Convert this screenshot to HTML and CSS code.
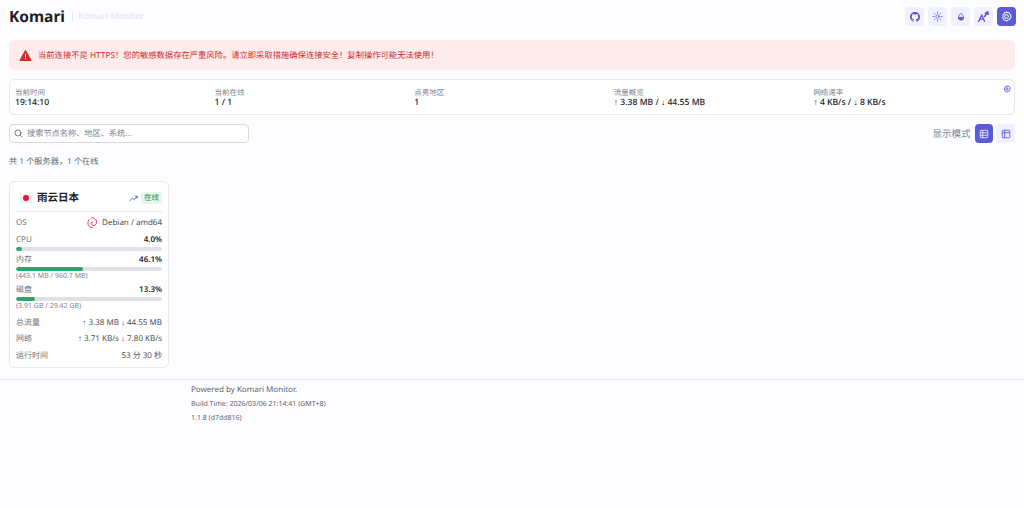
FILE: index.html
```html
<!DOCTYPE html>
<html lang="zh-CN">
<head>
<meta charset="utf-8">
<title>Komari Monitor</title>
<link rel="stylesheet" href="styles.css">
</head>
<body>
<header class="topbar">
  <div class="brand"><span class="brand-name">Komari</span><span class="brand-sep"></span><span class="brand-sub">Komari Monitor</span></div>
  <div class="actions">
    <button class="icon-btn"><svg viewBox="0 0 16 16" width="10" height="10" fill="currentColor"><path d="M8 0C3.58 0 0 3.58 0 8c0 3.54 2.29 6.53 5.47 7.59.4.07.55-.17.55-.38 0-.19-.01-.82-.01-1.490-2.010.37-2.530-.49-2.690-.94-.09-.23-.48-.94-.82-1.130-.28-.15-.68-.52-.01-.53.63-.01 1.080.58 1.230.82.72 1.210 1.870.87 2.330.66.07-.52.28-.87.51-1.070-1.780-.2-3.640-.89-3.640-3.950 0-.87.31-1.590.82-2.150-.08-.2-.36-1.020.08-2.120 0 0 .67-.21 2.200.82.64-.18 1.320-.27 2-.27.68 0 1.360.09 2 .27 1.530-1.040 2.200-.82 2.200-.82.44 1.100.16 1.920.08 2.120.51.56.82 1.270.82 2.150 0 3.070-1.870 3.750-3.650 3.950.29.25.54.73.54 1.480 0 1.070-.01 1.930-.01 2.200 0 .21.15.46.55.38A8.013 8.013 0 0 0 16 8c0-4.420-3.580-8-8-8z"/></svg></button>
    <button class="icon-btn"><svg viewBox="0 0 24 24" width="11" height="11" fill="none" stroke="currentColor" stroke-width="1.600" stroke-linecap="round"><circle cx="12" cy="12" r="3.500"/><path d="M12 2v3M12 19v3M2 12h3M19 12h3M4.900 4.900l2.100 2.100M17 17l2.100 2.100M4.900 19.100 7 17M17 7l2.100-2.100"/></svg></button>
    <button class="icon-btn"><svg viewBox="0 0 24 24" width="10" height="10" fill="none" stroke="currentColor" stroke-width="2.200" stroke-linejoin="round"><path d="M12 3c3 3.500 6 6 6 10.500a6 6 0 0 1-12 0C6 9 9 6.500 12 3z"/><path d="M6 13h12a6 6 0 0 1-12 0z" fill="currentColor"/></svg></button>
    <button class="icon-btn"><svg viewBox="0 0 24 24" width="13" height="13" fill="none" stroke="currentColor" stroke-width="2.200" stroke-linecap="round" stroke-linejoin="round"><path d="M3 21 9 9l5 12M5 17h7" stroke-width="2.400"/><path d="M14 12l5-7" stroke-width="3"/><path d="M15 6l5-3 1 5z" fill="currentColor"/></svg></button>
    <button class="icon-btn active"><svg viewBox="0 0 24 24" width="11" height="11" fill="none" stroke="currentColor" stroke-width="2.200"><path d="M12 2l2.500 1.800 3-.2 1.300 2.700 2.700 1.700-.5 3 1 3-2.500 1.800-.8 2.900-3 .4L12 22l-2.200-2.100-3-.4L6 16.600 3.500 14.800l1-3-.5-3 2.700-1.700L8 3.600l3 .2z"/><circle cx="12" cy="12" r="4"/></svg></button>
  </div>
</header>

<main class="content">
  <div class="alert">
    <svg class="alert-icon" viewBox="0 0 24 24" width="13" height="13"><path d="M12 3 2 21h20z" fill="#ce2c31" stroke="#ce2c31" stroke-width="2" stroke-linejoin="round"/><path d="M12 9v6M12 16.500v2" stroke="#feebec" stroke-width="2"/></svg>
    <span class="alert-text">当前连接不是 HTTPS！您的敏感数据存在严重风险。请立即采取措施确保连接安全！复制操作可能无法使用！</span>
  </div>

  <section class="stats">
    <div class="stat"><div class="stat-label">当前时间</div><div class="stat-value">19:14:10</div></div>
    <div class="stat"><div class="stat-label">当前在线</div><div class="stat-value">1 / 1</div></div>
    <div class="stat"><div class="stat-label">点亮地区</div><div class="stat-value">1</div></div>
    <div class="stat"><div class="stat-label">流量概览</div><div class="stat-value"><span class="arrow">↑</span> 3.38 MB / <span class="arrow">↓</span> 44.55 MB</div></div>
    <div class="stat"><div class="stat-label">网络速率</div><div class="stat-value"><span class="arrow">↑</span> 4 KB/s / <span class="arrow">↓</span> 8 KB/s</div></div>
    <svg class="stats-gear" viewBox="0 0 24 24" width="8" height="8" fill="none" stroke="#5b5bd6" stroke-width="2.800"><path d="M12 2l2.500 1.800 3-.2 1.300 2.700 2.700 1.700-.5 3 1 3-2.500 1.800-.8 2.900-3 .4L12 22l-2.200-2.100-3-.4L6 16.600 3.500 14.800l1-3-.5-3 2.700-1.700L8 3.600l3 .2z"/><circle cx="12" cy="12" r="3.500"/></svg>
  </section>

  <div class="toolbar">
    <label class="search">
      <svg viewBox="0 0 24 24" width="9" height="9" fill="none" stroke="#60646c" stroke-width="2.200" stroke-linecap="round"><circle cx="10.500" cy="10.500" r="8"/><path d="M21 21l-4.800-4.800"/></svg>
      <span class="search-text">搜索节点名称、地区、系统...</span>
    </label>
    <div class="view-mode">
      <span class="view-label">显示模式</span>
      <div class="view-btns">
        <button class="view-btn active"><svg viewBox="0 0 24 24" width="10" height="10" fill="none" stroke="currentColor" stroke-width="2"><rect x="3" y="3" width="18" height="18" rx="2"/><path d="M3 9h18M3 15h18M9 3v18"/></svg></button>
        <button class="view-btn"><svg viewBox="0 0 24 24" width="10" height="10" fill="none" stroke="currentColor" stroke-width="2.200"><rect x="3" y="3" width="18" height="18" rx="2"/><path d="M3 9h18M9 3v18"/></svg></button>
      </div>
    </div>
  </div>

  <p class="summary">共 <span class="num">1</span> 个服务器，<span class="num">1</span> 个在线</p>

  <article class="card">
    <div class="card-head">
      <span class="flag"><span class="flag-dot"></span></span>
      <strong class="node-name">雨云日本</strong>
      <svg class="trend" viewBox="0 0 24 24" width="9" height="9" fill="none" stroke="#5b5bd6" stroke-width="2.600" stroke-linecap="round" stroke-linejoin="round"><path d="M2 18l7-7 5 4 8-9M17 6h5v5"/></svg>
      <span class="badge">在线</span>
    </div>
    <div class="row os"><span class="key">OS</span><span class="val"><svg viewBox="0 0 24 24" width="12" height="13" fill="none" stroke="#d70a53" stroke-width="1.500" stroke-linecap="round"><path d="M10 3c6-2 11 2 11 8 0 5-4 8-8 7-3-1-4-4-2-6 1-1 3-1 3 1M6 6c-3 4-3 10 0 13 2 2 4 3 7 3"/></svg>Debian / amd64</span></div>
    <div class="metric">
      <div class="row"><span class="key">CPU</span><b>4.0%</b></div>
      <div class="bar"><div class="fill" style="width:4%"></div></div>
    </div>
    <div class="metric">
      <div class="row"><span class="key">内存</span><b>46.1%</b></div>
      <div class="bar"><div class="fill" style="width:46.1%"></div></div>
      <div class="note">(443.1 MB / 960.7 MB)</div>
    </div>
    <div class="metric">
      <div class="row"><span class="key">磁盘</span><b>13.3%</b></div>
      <div class="bar"><div class="fill" style="width:13.3%"></div></div>
      <div class="note">(3.91 GB / 29.42 GB)</div>
    </div>
    <div class="row info"><span class="key">总流量</span><span class="val val-text"><span class="arrow">↑</span> 3.38 MB <span class="arrow">↓</span> 44.55 MB</span></div>
    <div class="row info"><span class="key">网络</span><span class="val val-text"><span class="arrow">↑</span> 3.71 KB/s <span class="arrow">↓</span> 7.80 KB/s</span></div>
    <div class="row info"><span class="key">运行时间</span><span class="val val-text">53 分 30 秒</span></div>
  </article>
</main>

<footer class="footer">
  <p class="powered">Powered by Komari Monitor.</p>
  <p class="build">Build Time: 2026/03/06 21:14:41 (GMT+8)</p>
  <p class="build build-ver">1.1.8 (d7dd816)</p>
</footer>
</body>
</html>
```
FILE: styles.css
```css
* { box-sizing: border-box; }
html, body { height: 100%; }
body {
  margin: 0;
  background: #fdfdff;
  color: #1c2024;
  font-family: "Noto Sans", "Noto Sans CJK SC", sans-serif;
  font-size: 9px;
  line-height: 1;
  text-rendering: geometricPrecision;
}
button { font: inherit; border: 0; padding: 0; cursor: pointer; }
p { margin: 0; }
.arrow { font-family: "Liberation Sans", sans-serif; font-weight: 400; }

.topbar {
  height: 32px;
  padding: 7px 8px 0 9px;
  display: flex;
  justify-content: space-between;
  align-items: flex-start;
}
.brand { display: flex; align-items: center; height: 19px; }
.brand-name { font-size: 15.500px; font-weight: 700; color: #1c2024; }
.brand-sep { width: 1px; height: 9px; background: #e8e8ec; margin: 0 5px 0 7px; }
.brand-sub { font-size: 8.600px; font-weight: 600; color: #e6e7fb; }
.actions { display: flex; gap: 4px; }
.icon-btn {
  width: 19px; height: 19px;
  border-radius: 4px;
  background: #f0f0fe;
  color: #5b5bd6;
  display: flex; align-items: center; justify-content: center;
}
.icon-btn.active { background: #5b5bd6; color: #f0f0fe; }

.content { padding: 8px 9px 0; }
.alert {
  height: 30px;
  border-radius: 6px;
  background: #feebec;
  color: #ce2c31;
  display: flex;
  align-items: center;
  gap: 6px;
  padding: 0 10px;
  font-size: 8.300px;
}
.alert-text { padding-top: 2px; }
.stats {
  position: relative;
  margin-top: 9px;
  height: 36px;
  border: 1px solid #e8e8ec;
  border-radius: 6px;
  background: #fff;
  padding: 8px 5px 0;
  display: grid;
  grid-template-columns: repeat(5, 199.6px);
}
.stat-label { font-size: 7.500px; color: #80838d; line-height: 10px; }
.stat-value { font-size: 8.600px; font-weight: 500; color: #1c2024; line-height: 10px; margin-top: -1px; }
.stats-gear { position: absolute; top: 4.500px; right: 3px; }

.toolbar {
  margin-top: 9px;
  height: 19px;
  display: flex;
  justify-content: space-between;
  align-items: center;
}
.search {
  width: 240px; height: 19px;
  background: #fff;
  border: 1px solid #d9d9e0;
  border-radius: 4px;
  display: flex; align-items: center;
  gap: 4px;
  padding-left: 4px;
  color: #80838d;
  font-size: 8.200px;
}
.search-text { padding-top: 1px; }
.view-mode { display: flex; align-items: center; gap: 4px; }
.view-label { font-size: 9.500px; color: #80838d; }
.view-btns { display: flex; gap: 3px; }
.view-btn {
  width: 18.700px; height: 19px; border-radius: 4px;
  background: #f0f0fe; color: #5b5bd6;
  display: flex; align-items: center; justify-content: center;
}
.view-btn.active { background: #5b5bd6; color: #f0f0fe; }

.summary { margin-top: 14px; height: 10px; font-size: 8.200px; line-height: 10px; color: #60646c; }
.summary .num { color: #3a5bc7; }

.card {
  margin-top: 14px;
  width: 160px; height: 187px;
  background: #fff;
  border: 1px solid #e8e8ec;
  border-radius: 6px;
  padding: 0 6px;
  font-size: 8px;
}
.card-head {
  height: 30px;
  display: flex; align-items: center;
  border-bottom: 1px solid #e8e8ec;
  padding: 3px 0 0 4px;
}
.flag {
  width: 12px; height: 9px; background: #f2f2f5;
  display: flex; align-items: center; justify-content: center;
  margin-right: 5px;
}
.flag-dot { width: 6px; height: 6px; border-radius: 50%; background: #ee1133; }
.node-name { font-size: 10.500px; font-weight: 700; flex: 1; }
.trend { margin-right: 3px; }
.badge {
  background: #e6f6eb; color: #218358;
  font-size: 7.500px; line-height: 12px;
  padding: 0 3px; border-radius: 2px;
}
.row { display: flex; justify-content: space-between; align-items: center; height: 13px; }
.key { color: #70737d; }
.val { display: flex; align-items: center; gap: 4px; color: #4b4f56; }
.val-text { display: block; white-space: pre; }
.row b { font-weight: 600; color: #1c2024; }
.os { margin-top: 4px; }
.metric { margin-top: 4px; }
.metric + .metric { margin-top: 2px; }
.bar { height: 4px; border-radius: 2px; background: #e0e1e6; margin-top: 1px; overflow: hidden; }
.fill { height: 100%; border-radius: 2px; background: #30a46c; }
.note { font-size: 7px; line-height: 9px; color: #80838d; margin-top: 1px; }
.info { height: 16.500px; }
.metric + .info { margin-top: 3.500px; }

.footer {
  margin-top: 11px;
  border-top: 1px solid #e8e8ec;
  padding: 5px 0 0 191px;
  color: #60646c;
}
.powered { font-size: 8px; line-height: 10px; }
.build { font-size: 7px; line-height: 10px; margin-top: 5px; }
.build-ver { margin-top: 4px; }
```
